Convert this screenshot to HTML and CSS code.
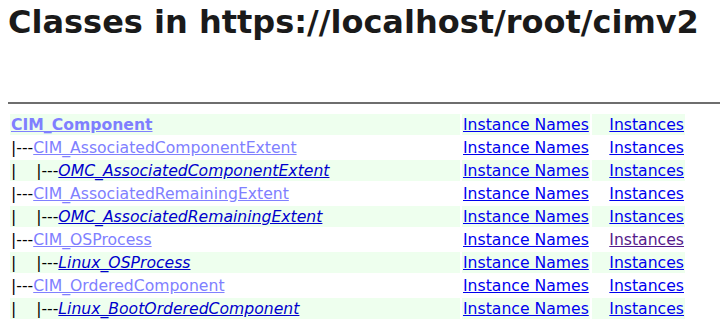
FILE: index.html
```html
<!DOCTYPE html>
<html>
<head>
<meta charset="utf-8">
<title>Classes</title>
<link rel="stylesheet" href="styles.css">
</head>
<body>
<h1 class="title">Classes in https://localhost/root/cimv2</h1>
<hr class="rule">
<table class="classes">
<tr class="odd"><td class="name"><a class="top" href="#">CIM_Component</a></td><td class="iname"><a href="#">Instance Names</a></td><td class="inst"><a href="#">Instances</a></td></tr>
<tr><td class="name">|---<a class="base" href="#">CIM_AssociatedComponentExtent</a></td><td class="iname"><a href="#">Instance Names</a></td><td class="inst"><a href="#">Instances</a></td></tr>
<tr class="odd"><td class="name">|&nbsp;&nbsp;&nbsp;&nbsp;|---<a class="impl" href="#">OMC_AssociatedComponentExtent</a></td><td class="iname"><a href="#">Instance Names</a></td><td class="inst"><a href="#">Instances</a></td></tr>
<tr><td class="name">|---<a class="base" href="#">CIM_AssociatedRemainingExtent</a></td><td class="iname"><a href="#">Instance Names</a></td><td class="inst"><a href="#">Instances</a></td></tr>
<tr class="odd"><td class="name">|&nbsp;&nbsp;&nbsp;&nbsp;|---<a class="impl" href="#">OMC_AssociatedRemainingExtent</a></td><td class="iname"><a href="#">Instance Names</a></td><td class="inst"><a href="#">Instances</a></td></tr>
<tr><td class="name">|---<a class="base" href="#">CIM_OSProcess</a></td><td class="iname"><a href="#">Instance Names</a></td><td class="inst"><a class="visited" href="#">Instances</a></td></tr>
<tr class="odd"><td class="name">|&nbsp;&nbsp;&nbsp;&nbsp;|---<a class="impl" href="#">Linux_OSProcess</a></td><td class="iname"><a href="#">Instance Names</a></td><td class="inst"><a href="#">Instances</a></td></tr>
<tr><td class="name">|---<a class="base" href="#">CIM_OrderedComponent</a></td><td class="iname"><a href="#">Instance Names</a></td><td class="inst"><a href="#">Instances</a></td></tr>
<tr class="odd"><td class="name">|&nbsp;&nbsp;&nbsp;&nbsp;|---<a class="impl" href="#">Linux_BootOrderedComponent</a></td><td class="iname"><a href="#">Instance Names</a></td><td class="inst"><a href="#">Instances</a></td></tr>
</table>
</body>
</html>
```
FILE: styles.css
```css
html, body {
  overflow: hidden;
}
body {
  margin: 0 0 0 8px;
  font-family: "DejaVu Sans", sans-serif;
  font-size: 15.65px;
  color: #000;
  background: #fff;
}
.title {
  font-size: 32px;
  font-weight: bold;
  color: #1a1a1a;
  margin: 3px 0 0 0;
  white-space: nowrap;
}
.rule {
  margin: 61px 0 0 0;
  border: 0;
  border-top: 2px solid #6e6e6e;
  height: 0;
}
.classes {
  margin-top: 8px;
  border-collapse: separate;
  border-spacing: 2px;
}
.classes td {
  padding: 1px;
  white-space: nowrap;
  line-height: 19px;
}
.classes tr.odd td {
  background: #eeffee;
}
.name {
  width: 448px;
}
.iname {
  width: 126px;
}
.inst {
  width: 91px;
  text-align: right;
}
a {
  color: #0000ee;
}
a.visited {
  color: #551a8b;
}
a.top {
  font-weight: bold;
  color: #7f7fff;
}
a.base {
  color: #8080ff;
}
a.impl {
  font-style: italic;
  color: #0000cc;
}
```
